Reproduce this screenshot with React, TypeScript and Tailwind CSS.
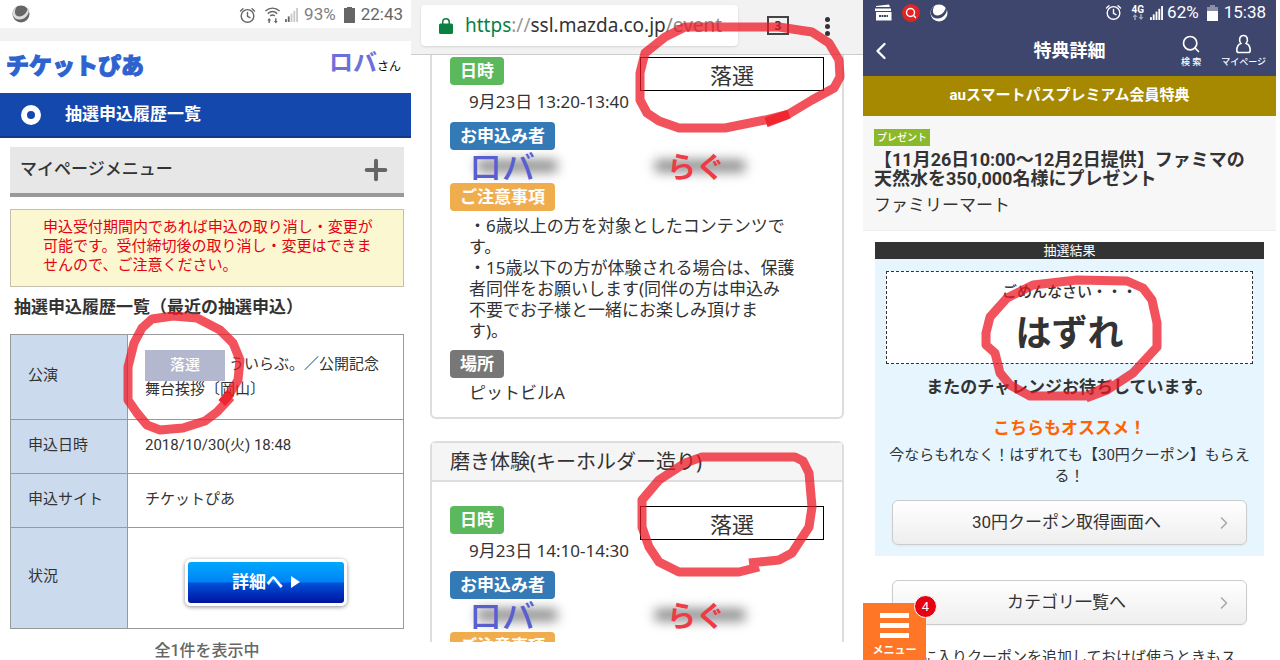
import React from 'react';
import { ChevronLeft, ChevronRight, Plus, Search } from 'lucide-react';

interface IconProps {
  className?: string;
}

const AlarmIcon: React.FC<IconProps> = ({ className }) => (
  <svg className={className} viewBox="0 0 18 18" fill="none" stroke="currentColor" strokeWidth={1.5} strokeLinecap="round">
    <circle cx="9" cy="9.5" r="6.7" />
    <path d="M9 5.8v4l2.6 1.5M1.6 4.2l2.6-2.4M16.4 4.2l-2.6-2.4" />
  </svg>
);

const WifiIcon: React.FC<IconProps> = ({ className }) => (
  <svg className={className} viewBox="0 0 18 18" fill="none" stroke="currentColor" strokeWidth={1.5}>
    <path d="M1.5 4.2C6 .2 12 .2 16.500 4.200M4 7c3-2.600 7-2.600 10 0M6.500 9.500c1.600-1.300 3.400-1.300 5 0" />
    <path d="M5.500 17v-4M12.500 12v4" />
    <path d="M3.500 14.200l2-2.600 2 2.600zM10.500 14.800l2 2.600 2-2.600z" fill="currentColor" stroke="none" />
  </svg>
);

const SignalIcon: React.FC<IconProps & { level: number }> = ({ className, level }) => (
  <svg className={className} viewBox="0 0 14 15" fill="currentColor">
    {[3, 6, 9, 12, 15].map((h, i) => (
      <rect key={h} x={i * 3} y={15 - h} width="2" height={h} opacity={i < level ? 1 : 0.35} />
    ))}
  </svg>
);

const BatteryIcon: React.FC<IconProps & { fill: number }> = ({ className, fill }) => (
  <svg className={className} viewBox="0 0 11 16" fill="currentColor">
    <path d="M3 0h5v2h3v14H0V2h3z" opacity="0.4" />
    <rect x="0" y={16 - fill} width="11" height={fill} />
    {fill > 13 && <rect x="3" y="0" width="5" height="3" />}
  </svg>
);

const SwirlIcon: React.FC<{ className?: string; gap: string }> = ({ className, gap }) => (
  <svg className={className} viewBox="0 0 18 18">
    <circle cx="9" cy="9" r="8.500" fill="currentColor" />
    <path d="M4.500 2C1.500 7 3 11.500 7.500 11.500c4 0 7.500-4 8.500-8.500l1 1.500C17 10 13 14.500 7.500 14.500 4 14.500 1.500 12.500.8 10 .3 6.500 2 3.500 4.500 2z" fill={gap} />
  </svg>
);

const PersonIcon: React.FC<IconProps> = ({ className }) => (
  <svg className={className} viewBox="0 0 16 18" fill="none" stroke="currentColor" strokeWidth={1.5}>
    <path d="M5.500 8.500C3.200 5.800 4.200 1 8 1s4.800 4.800 2.500 7.500c2.800 1 3.800 3.500 3.800 6.500 0 1.300-.7 2-2 2H3.700c-1.300 0-2-.7-2-2 0-3 1-5.500 3.800-6.500z" />
  </svg>
);

const Marker: React.FC<{ paths: string[]; viewBox: string; width: number }> = ({ paths, viewBox, width }) => (
  <svg className="pointer-events-none absolute left-0 top-0 z-10" viewBox={viewBox} width={width} height={660}>
    {paths.map((d) => (
      <path key={d} d={d} fill="none" stroke="#ee1522" strokeOpacity="0.74" strokeWidth={9} strokeLinejoin="round" />
    ))}
  </svg>
);

const PiaPanel: React.FC = () => (
  <section className="relative overflow-hidden bg-white text-[#333]">
    <div className="flex h-7 items-center pl-3 pr-2 text-[17px] text-[#666]">
      <SwirlIcon className="h-[18px] w-[18px]" gap="#ddd" />
      <div className="ml-auto flex items-center pt-0.5">
        <AlarmIcon className="h-[17px] w-[17px]" />
        <WifiIcon className="ml-2 h-[17px] w-[17px]" />
        <SignalIcon className="ml-1 h-[14px] w-[13px]" level={2} />
        <span className="ml-1.5 text-[#808080]">93%</span>
        <BatteryIcon className="ml-2 h-4 w-[11px]" fill={15} />
        <span className="ml-1.5">22:43</span>
      </div>
    </div>
    <div className="h-[13px] bg-[#f2f2f2]" />
    <div className="flex h-[52px] items-center justify-between pl-1.5 pr-2.5">
      <a href="#top" className="text-[23px] font-black leading-8 text-[#2e63cf] [-webkit-text-stroke:1px_#2e63cf]">チケットぴあ</a>
      <div className="flex items-baseline pb-2 text-[12px] text-black">
        <span className="text-[24px] font-bold leading-8 text-[#6d6fda]">ロバ</span>さん
      </div>
    </div>
    <h1 className="flex h-[45px] items-center border-b-2 border-[#123a86] bg-[#1448ac] pl-[21px] text-[17px] font-bold text-white">
      <span className="mr-6 h-5 w-5 rounded-full border-6 border-white" />
      抽選申込履歴一覧
    </h1>
    <div className="px-2.5 pr-[7px]">
      <button className="mt-[9px] flex h-[50px] w-full items-center justify-between border-b-4 border-[#999] bg-[#e7e7e7] pl-2.5 pr-3 text-[17px] font-medium">
        マイページメニュー
        <Plus className="h-8 w-8 text-[#666]" strokeWidth={3} />
      </button>
      <p className="mt-3 h-[78px] border border-[#c4bfae] bg-[#fbf7d0] pl-8 pt-2 text-[15px] leading-[19px] text-[#e60012]">
        申込受付期間内であれば申込の取り消し・変更が
        <br />
        可能です。受付締切後の取り消し・変更はできま
        <br />
        せんので、ご注意ください。
      </p>
      <h2 className="mt-2 pl-1 text-[17px] font-bold leading-6">抽選申込履歴一覧（最近の抽選申込）</h2>
      <table className="mt-[15px] w-full border-collapse text-[15px] leading-6 [&_td]:border [&_td]:border-[#999] [&_td]:pb-1 [&_td]:pl-[17px] [&_th]:w-[117px] [&_th]:border [&_th]:border-[#999] [&_th]:bg-[#cbdbed] [&_th]:pb-1 [&_th]:pl-[17px] [&_th]:text-left [&_th]:font-normal">
        <tbody>
          <tr className="h-[85px]">
            <th scope="row">公演</th>
            <td>
              <span className="mr-1 inline-block h-[31px] w-20 bg-[#b4b8cf] text-center align-middle font-medium leading-[31px] text-white">落選</span>
              ういらぶ。／公開記念
              <div className="-mt-1 leading-6">舞台挨拶〔岡山〕</div>
            </td>
          </tr>
          <tr className="h-[54px]">
            <th scope="row">申込日時</th>
            <td>2018/10/30(火) 18:48</td>
          </tr>
          <tr className="h-[54px]">
            <th scope="row">申込サイト</th>
            <td>チケットぴあ</td>
          </tr>
          <tr className="h-[101px]">
            <th scope="row">状況</th>
            <td>
              <button className="ml-10 mt-3 flex h-[47px] w-[162px] items-center justify-center gap-2 rounded-md border-3 border-white bg-[linear-gradient(#00a9ff,#0082f5_49%,#0050d8_51%,#0014a0)] text-[17px] font-bold text-white shadow-[0_1px_4px_rgba(0,0,0,0.45)]">
                詳細へ
                <svg className="h-3 w-[9px]" viewBox="0 0 9 12" fill="currentColor">
                  <path d="M0 0l9 6-9 6z" />
                </svg>
              </button>
            </td>
          </tr>
        </tbody>
      </table>
      <p className="mt-2.5 text-center text-[16px] font-medium leading-6 text-[#666]">全1件を表示中</p>
    </div>
    <Marker
      viewBox="0 0 411 660"
      width={411}
      paths={[
        'M222 403L230 393 238 380 240 360 233 343 220 330 197 318 173 316 152 319 142 328 134 343 128 367 128 400 137 413 147 425 160 430 183 428 205 421 217 412 231 397',
        'M222 403L231 393',
      ]}
    />
  </section>
);

const Tag: React.FC<{ className: string; children: React.ReactNode }> = ({ className, children }) => (
  <div className={`w-fit rounded px-2.5 text-[17px] font-bold leading-7 text-white ${className}`}>{children}</div>
);

const EntryHead: React.FC<{ time: string }> = ({ time }) => (
  <>
    <div className="flex items-start justify-between">
      <div>
        <Tag className="bg-[#5cb85c]">日時</Tag>
        <div className="mt-1.5 pl-[19px] leading-[21px]">{time}</div>
      </div>
      <div className="h-[34px] w-[184px] border border-black text-center text-[22px] leading-[34px]">落選</div>
    </div>
    <Tag className="mt-2.5 bg-[#337ab7]">お申込み者</Tag>
    <div className="flex h-[33px] items-center pl-[19px]">
      <div className="relative w-[186px]">
        <div className="absolute left-2 top-2 h-3 w-20 bg-[#888] blur-[6px]" />
        <span className="relative block text-[33px] font-medium leading-[30px] text-[#5a5fd0]">ロバ</span>
      </div>
      <div className="relative">
        <div className="absolute left-0 top-2 h-3 w-[90px] bg-[#888] blur-[6px]" />
        <span className="relative block pl-3 text-[29px] font-bold leading-[30px] text-[#ee3b46]">らぐ</span>
      </div>
    </div>
    <Tag className="bg-[#f0ad4e]">ご注意事項</Tag>
  </>
);

const MazdaPanel: React.FC = () => (
  <section className="relative flex flex-col overflow-hidden bg-white pb-[18px] font-['Noto_Sans','Noto_Sans_CJK_JP',sans-serif] text-[17px] text-[#333]">
    <header className="flex h-[55px] shrink-0 items-start border-b border-[#ccc] bg-[#f2f2f2] pl-2.5 pt-[5px]">
      <div className="flex h-[41px] w-[317px] items-center rounded-sm bg-white pl-[18px] text-[19px] shadow">
        <svg className="mr-3 h-4 w-[14px] shrink-0 text-[#0b8043]" viewBox="0 0 14 16" fill="currentColor">
          <path d="M1.500 5.500H3V4a4 4 0 018 0v1.500h1.500A1.500 1.500 0 0114 7v7.500a1.500 1.500 0 01-1.500 1.500h-11A1.500 1.500 0 010 14.500V7a1.500 1.500 0 011.500-1.500zm3 0h5V4a2.500 2.500 0 00-5 0z" />
        </svg>
        <span className="whitespace-nowrap">
          <span className="text-[#0b8043]">https</span>
          <span className="text-[#999]">://</span>ssl.mazda.co.jp<span className="text-[#888]">/event</span>
        </span>
      </div>
      <button className="ml-[29px] mt-[11px] h-[19px] w-[22px] border-2 border-[#444] text-[12px] font-bold leading-[15px]">3</button>
      <button aria-label="メニュー" className="ml-9 mt-3 flex flex-col gap-[2px]">
        <span className="h-[5px] w-[5px] rounded-full bg-[#333]" />
        <span className="h-[5px] w-[5px] rounded-full bg-[#333]" />
        <span className="h-[5px] w-[5px] rounded-full bg-[#333]" />
      </button>
    </header>
    <div className="min-h-0 flex-1 overflow-hidden px-[19px]">
      <article className="rounded-b-md border-2 border-t-0 border-[#ddd] px-[18px] pb-[14px] pt-0.5">
        <EntryHead time="9月23日 13:20-13:40" />
        <p className="mt-1 pl-[19px] leading-[21px]">
          ・6歳以上の方を対象としたコンテンツで
          <br />
          す。
          <br />
          ・15歳以下の方が体験される場合は、保護
          <br />
          者同伴をお願いします(同伴の方は申込み
          <br />
          不要でお子様と一緒にお楽しみ頂けま
          <br />
          す)。
        </p>
        <Tag className="mt-[9px] bg-[#777]">場所</Tag>
        <div className="mt-1 pl-[19px] leading-[21px]">ピットビルA</div>
      </article>
      <article className="mt-[22px] rounded-t-md border-2 border-[#ddd]">
        <h2 className="border-b-2 border-[#ddd] bg-[#f5f5f5] pl-[18px] text-[20px] leading-[37px]">磨き体験(キーホルダー造り)</h2>
        <div className="px-[18px] pt-6">
          <EntryHead time="9月23日 14:10-14:30" />
        </div>
      </article>
    </div>
    <Marker
      viewBox="411 0 452 660"
      width={452}
      paths={[
        'M766 123L787 115 812 100 834 88 840 77 839 60 829 43 812 32 779 27 685 27 665 37 645 53 640 73 640 100 647 113 659 121 679 128 725 128 765 120 789 114',
        'M766 122L789 114',
        'M749 563L779 560 792 553 809 527 812 507 809 473 803 461 795 457 702 457 685 463 659 480 642 500 642 527 649 547 659 562 679 572 739 572 759 567',
      ]}
    />
  </section>
);

const LinkButton: React.FC<{ children: React.ReactNode }> = ({ children }) => (
  <button className="flex h-[45px] flex-1 items-center rounded-md border border-[#ccc] bg-linear-to-b from-white to-[#eee] pl-9 pr-3 text-[17px] shadow-xs">
    <span className="flex-1">{children}</span>
    <ChevronRight className="ml-2.5 h-5 w-5 text-[#aaa]" />
  </button>
);

const SmartPassPanel: React.FC = () => (
  <section className="relative overflow-hidden bg-white text-[#333]">
    <div className="flex h-[25px] items-center bg-[#3e466d] pl-3 pr-2.5 text-[17px] text-white">
      <svg className="h-[17px] w-[17px]" viewBox="0 0 17 17" fill="currentColor">
        <path d="M1 2l13-1.500 1 2.500H1zM0 4.500h16V7H0zM1 8h15.500v8.500H1z" />
        <path d="M4 12h9" stroke="#3e466d" strokeWidth="2" strokeDasharray="2 .5" />
      </svg>
      <span className="ml-2.5 flex h-[18px] w-[18px] items-center justify-center rounded-full bg-[#e02424]">
        <Search className="h-3 w-3" strokeWidth={3} />
      </span>
      <SwirlIcon className="ml-2.5 h-[18px] w-[18px]" gap="#3e466d" />
      <div className="ml-auto flex items-center">
        <AlarmIcon className="h-[17px] w-[17px]" />
        <span className="ml-2.5 flex flex-col items-center text-[10px] font-bold leading-[9px]">
          4G
          <svg className="h-[6px] w-3 opacity-50" viewBox="0 0 12 6" fill="currentColor">
            <path d="M3 0l2.500 3h-1.700v3H2.200V3H.5zM9 6L6.500 3h1.700V0h1.600v3h1.700z" />
          </svg>
        </span>
        <SignalIcon className="ml-1.5 h-[14px] w-[13px]" level={5} />
        <span className="ml-1">62%</span>
        <BatteryIcon className="ml-2 h-4 w-[11px]" fill={10} />
        <span className="ml-1.5">15:38</span>
      </div>
    </div>
    <header className="grid h-[51px] grid-cols-[1fr_auto_1fr] items-center bg-[#3e466d] px-2.5 text-white">
      <a href="#back" aria-label="戻る">
        <ChevronLeft className="-ml-1.5 h-7 w-7" />
      </a>
      <h1 className="text-[18px] font-bold">特典詳細</h1>
      <nav className="flex justify-end gap-5 text-[9px] font-medium leading-3">
        <a href="#search" className="flex flex-col items-center gap-0.5">
          <Search className="h-5 w-5" />
          検 索
        </a>
        <a href="#mypage" className="flex flex-col items-center gap-0.5">
          <PersonIcon className="h-5 w-[17px]" />
          マイページ
        </a>
      </nav>
    </header>
    <div className="h-10 bg-[#a68900] text-center text-[15px] font-bold leading-[38px] text-white">auスマートパスプレミアム会員特典</div>
    <div className="border-b border-[#eee] bg-[#f7f7f7] py-[13px] pl-[11px]">
      <div className="h-[17px] w-fit bg-[#8cb82b] px-[3px] text-[10px] font-medium leading-[17px] text-white">プレゼント</div>
      <h2 className="mt-1 text-[18px] font-bold leading-[19px]">
        【11月26日10:00～12月2日提供】ファミマの
        <br />
        天然水を350,000名様にプレゼント
      </h2>
      <p className="mt-[5px] text-[17px] leading-6">ファミリーマート</p>
    </div>
    <div className="mt-[11px] px-3 text-center">
      <h3 className="bg-[#333] text-[13px] leading-[17px] text-white">抽選結果</h3>
      <div className="bg-[#e6f5fe] px-[11px] pb-[11px] pt-3">
        <div className="h-[93px] border border-dashed border-[#333] bg-white pt-2.5">
          <p className="text-[15px] font-medium leading-5">ごめんなさい・・・</p>
          <p className="mt-2.5 text-[36px] font-bold leading-[44px]">はずれ</p>
        </div>
        <p className="mt-[11px] text-[17px] font-bold leading-6">またのチャレンジお待ちしています。</p>
        <p className="mt-[17px] text-[17px] font-bold leading-6 text-[#ff6400]">こちらもオススメ！</p>
        <p className="mt-[5px] text-[15px] leading-[21px]">
          今ならもれなく！はずれても【30円クーポン】もらえ
          <br />
          る！
        </p>
        <div className="mt-[13px] flex px-1.5">
          <LinkButton>30円クーポン取得画面へ</LinkButton>
        </div>
      </div>
      <div className="mt-6 flex px-[17px]">
        <LinkButton>カテゴリ一覧へ</LinkButton>
      </div>
      <p className="mt-[22px] whitespace-nowrap px-[17px] text-left text-[15px] leading-[21px]">お気に入りクーポンを追加しておけば使うときもス</p>
    </div>
    <button className="absolute bottom-0 left-0 z-10 flex h-[57px] w-[63px] flex-col items-center gap-[5px] bg-[#ff7626] pt-2.5 text-[11px] font-bold leading-4 text-white">
      <span className="h-[5px] w-[29px] shrink-0 bg-white" />
      <span className="h-[5px] w-[29px] shrink-0 bg-white" />
      <span className="h-[5px] w-[29px] shrink-0 bg-white" />
      メニュー
      <span className="absolute -right-[11px] -top-2 flex h-[23px] w-[23px] items-center justify-center rounded-full border border-white bg-[#e60012] text-[13px] font-normal">4</span>
    </button>
    <Marker
      viewBox="863 0 413 660"
      width={413}
      paths={[
        'M1086 398L1107 390 1133 373 1157 347 1157 323 1152 300 1143 288 1127 281 1077 280 1033 285 1007 298 990 317 986 333 986 345 995 353 1000 373 1010 385 1030 396 1087 396 1113 383',
      ]}
    />
  </section>
);

const App: React.FC = () => {
  return (
    <main className="grid h-screen grid-cols-[411fr_452fr_413fr] overflow-hidden bg-white pr-1 font-['Roboto','Noto_Sans_CJK_JP',sans-serif]">
      <PiaPanel />
      <MazdaPanel />
      <SmartPassPanel />
    </main>
  );
};

export default App;
